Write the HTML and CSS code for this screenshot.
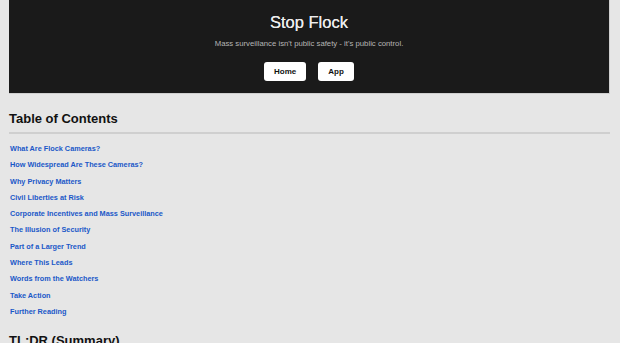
FILE: index.html
```html
<!DOCTYPE html>
<html lang="en">
<head>
    <meta charset="UTF-8">
    <meta name="viewport" content="width=device-width, initial-scale=1.0">
    <title>Stop Flock</title>
    <link rel="stylesheet" href="styles.css">
</head>
<body>
    <header class="site-header">
        <h1>Stop Flock</h1>
        <p class="tagline">Mass surveillance isn't public safety - it's public control.</p>
        <nav class="nav">
            <a class="nav-btn" href="#">Home</a>
            <a class="nav-btn" href="#">App</a>
        </nav>
    </header>

    <main>
        <h2>Table of Contents</h2>
        <ul class="toc">
            <li><a href="#what">What Are Flock Cameras?</a></li>
            <li><a href="#widespread">How Widespread Are These Cameras?</a></li>
            <li><a href="#privacy">Why Privacy Matters</a></li>
            <li><a href="#liberties">Civil Liberties at Risk</a></li>
            <li><a href="#incentives">Corporate Incentives and Mass Surveillance</a></li>
            <li><a href="#illusion">The Illusion of Security</a></li>
            <li><a href="#trend">Part of a Larger Trend</a></li>
            <li><a href="#leads">Where This Leads</a></li>
            <li><a href="#watchers">Words from the Watchers</a></li>
            <li><a href="#action">Take Action</a></li>
            <li><a href="#reading">Further Reading</a></li>
        </ul>

        <h2 class="plain">TL;DR (Summary)</h2>
    </main>
</body>
</html>
```

FILE: styles.css
```css
body {
    font-family: 'Liberation Sans', Arial, Helvetica, sans-serif;
    margin: 0;
    padding: 0 10px 0 9px;
    background-color: #e6e6e6;
    color: #111;
}

.site-header {
    background-color: #1a1a1a;
    text-align: center;
    padding: 11px 0 12px;
    border-right: 1px solid #cfcfcf;
    border-bottom: 1px solid #cfcfcf;
}

.site-header h1 {
    margin: 0;
    font-size: 16.5px;
    line-height: 22px;
    font-weight: normal;
    color: #ececec;
    text-shadow: 0 0 0.4px #ececec;
}

.tagline {
    margin: 6px 0 0;
    font-size: 7.75px;
    line-height: 10px;
    color: #b5b5b5;
}

.nav {
    display: flex;
    justify-content: center;
    gap: 12px;
    margin-top: 13px;
}

.nav-btn {
    display: block;
    background-color: white;
    color: #111;
    text-decoration: none;
    font-size: 8px;
    font-weight: bold;
    line-height: 19px;
    padding: 0 10px;
    border-radius: 3px;
}

h2 {
    margin: 17px 0 0;
    font-size: 13px;
    line-height: 16px;
    padding-bottom: 5px;
    border-bottom: 2px solid #cfcfcf;
    color: #111;
}

h2.plain {
    border-bottom: none;
    margin-top: 13px;
}

.toc {
    list-style: none;
    margin: 7px 0 0;
    padding: 0 0 0 1px;
}

.toc li {
    font-size: 7.3px;
    line-height: 16.3px;
    font-weight: bold;
}

.toc a {
    color: #1a58c8;
    text-decoration: none;
}
```
